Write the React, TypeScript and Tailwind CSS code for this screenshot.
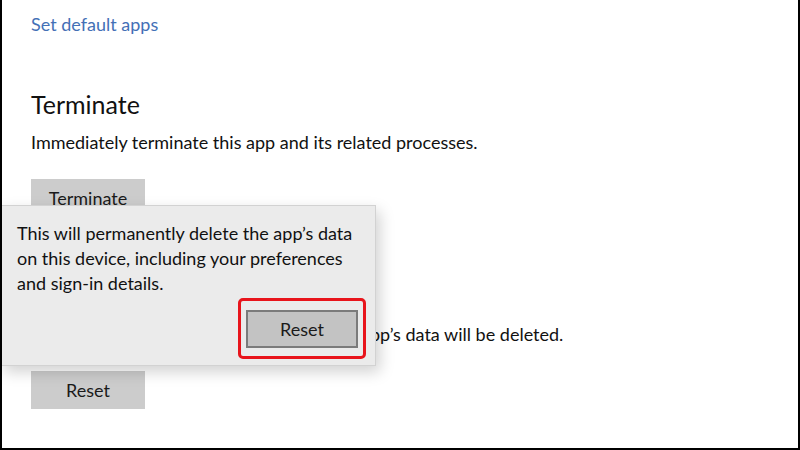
const font = { fontFamily: '"Segoe UI", Lato, "Noto Sans", sans-serif' };

const GrayButton = ({ label }: { label: string }) => (
  <div className="flex h-[38px] w-[114px] items-center justify-center bg-[#cccccc] text-[18px] text-[#1a1a1a]">
    {label}
  </div>
);

const ResetFlyout = () => (
  <div className="absolute left-[-2px] top-[205px] h-[161px] w-[376px] border border-[#d2d2d2] bg-[#ebebeb] shadow-[4px_6px_14px_rgba(0,0,0,0.18)]">
    <p className="pl-[16px] pt-[15px] text-[18px] leading-[25px] text-[#111]">
      This will permanently delete the app’s data
      <br />
      on this device, including your preferences
      <br />
      and sign-in details.
    </p>
    {/* highlighted confirm button */}
    <div className="absolute left-[237px] top-[92px] rounded-[5px] border-[3px] border-[#e8141b] pb-[8px] pl-[5px] pr-[5px] pt-[9px]">
      <div className="flex h-[38px] w-[112px] items-center justify-center border-2 border-[#7b7b7b] bg-[#c3c3c3] text-[18px] text-[#1a1a1a]">
        Reset
      </div>
    </div>
  </div>
);

export default function App() {
  return (
    <div
      className="relative h-[450px] w-[800px] overflow-hidden border-b-2 border-l-2 border-r-2 border-black bg-white"
      style={font}
    >
      <div className="flex flex-col items-start pl-[29px] pt-[12px]">
        <a className="text-[18px] leading-[24px] text-[#4470b6]">Set default apps</a>

        <h2 className="mt-[52px] text-[25px] leading-[32px] text-[#111]">Terminate</h2>
        <p className="mt-[10px] text-[18px] leading-[24px] text-[#111]">
          Immediately terminate this app and its related processes.
        </p>
        <div className="mt-[25px]">
          <GrayButton label="Terminate" />
        </div>

        <h2 className="mt-[63px] text-[25px] leading-[32px] text-[#111]">Reset</h2>
        <p className="mt-[10px] text-[18px] leading-[24px] text-[#111]">
          If this app isn’t working right, reset it. The app’s data will be deleted.
        </p>
        <div className="mt-[25px]">
          <GrayButton label="Reset" />
        </div>
      </div>

      <ResetFlyout />
    </div>
  );
}
